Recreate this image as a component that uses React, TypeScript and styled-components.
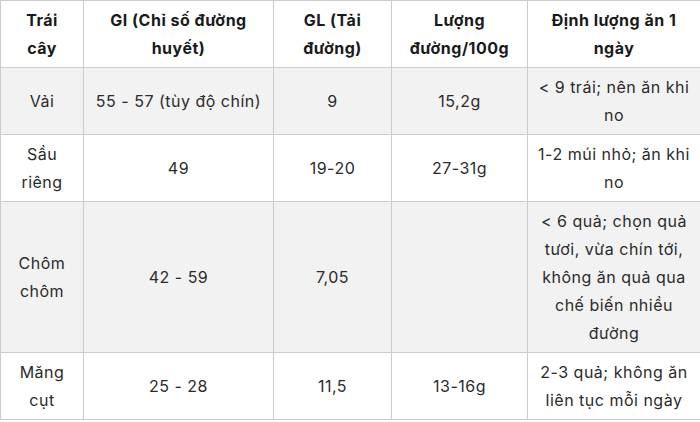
import React from "react";
import styled, { createGlobalStyle } from "styled-components";

const Global = createGlobalStyle`
  html, body { margin: 0; padding: 0; background: #ffffff; }
  body { font-family: Inter, "Noto Sans", "DejaVu Sans", sans-serif; }
`;

const Table = styled.table`
  width: 700px;
  border-collapse: collapse;
  table-layout: fixed;
  font-size: 16px;
  line-height: 28px;
  letter-spacing: 0.5px;
  color: #2b2b2b;
`;

const HeadCell = styled.th`
  border: 1px solid #cccccc;
  padding: 5px 10px;
  font-weight: 700;
  color: #1a1a1a;
  text-align: center;
  vertical-align: middle;
  background: #ffffff;
`;

const Row = styled.tr<{ $shaded: boolean }>`
  background: ${(p) => (p.$shaded ? "#f2f2f2" : "#ffffff")};
`;

const Cell = styled.td`
  border: 1px solid #cccccc;
  padding: 5px 10px;
  text-align: center;
  vertical-align: middle;
  font-weight: 400;
`;

const widths = [83, 190, 118, 136, 173];

const headers = [
  "Trái cây",
  "GI (Chỉ số đường huyết)",
  "GL (Tải đường)",
  "Lượng đường/100g",
  "Định lượng ăn 1 ngày",
];

const rows: string[][] = [
  ["Vải", "55 - 57 (tùy độ chín)", "9", "15,2g", "< 9 trái; nên ăn khi no"],
  ["Sầu riêng", "49", "19-20", "27-31g", "1-2 múi nhỏ; ăn khi no"],
  [
    "Chôm chôm",
    "42 - 59",
    "7,05",
    "",
    "< 6 quả; chọn quả tươi, vừa chín tới, không ăn quả qua chế biến nhiều đường",
  ],
  ["Măng cụt", "25 - 28", "11,5", "13-16g", "2-3 quả; không ăn liên tục mỗi ngày"],
];

export default function App() {
  return (
    <>
      <Global />
      <Table>
        <colgroup>
          {widths.map((w, i) => (
            <col key={i} style={{ width: w }} />
          ))}
        </colgroup>
        <thead>
          <tr>
            {headers.map((h) => (
              <HeadCell key={h}>{h}</HeadCell>
            ))}
          </tr>
        </thead>
        <tbody>
          {rows.map((r, i) => (
            <Row key={i} $shaded={i % 2 === 0}>
              {r.map((c, j) => (
                <Cell key={j}>{c}</Cell>
              ))}
            </Row>
          ))}
        </tbody>
      </Table>
    </>
  );
}
